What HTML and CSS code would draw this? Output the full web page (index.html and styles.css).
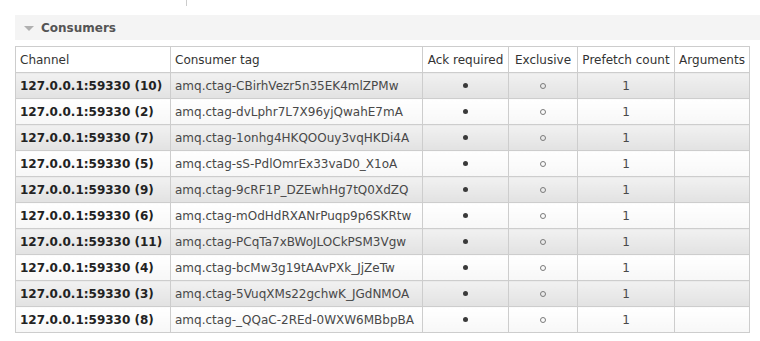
FILE: index.html
```html
<!DOCTYPE html>
<html>
<head>
<meta charset="utf-8">
<link rel="stylesheet" href="styles.css">
</head>
<body>
<div class="topbar"><span class="tick"></span></div>
<div class="section">
  <div class="section-head"><span class="tri"></span><span class="title">Consumers</span></div>
  <table class="list">
    <colgroup>
      <col class="c-ch"><col class="c-tag"><col class="c-ack"><col class="c-ex"><col class="c-pf"><col class="c-arg">
    </colgroup>
    <thead>
      <tr><th>Channel</th><th>Consumer tag</th><th class="ctr">Ack required</th><th class="ctr">Exclusive</th><th class="ctr">Prefetch count</th><th class="ctr">Arguments</th></tr>
    </thead>
    <tbody>
      <tr class="alt"><td class="ch">127.0.0.1:59330 (10)</td><td>amq.ctag-CBirhVezr5n35EK4mlZPMw</td><td class="ctr"><span class="yes" title="●"></span></td><td class="ctr"><span class="no" title="○"></span></td><td class="ctr">1</td><td></td></tr>
      <tr><td class="ch">127.0.0.1:59330 (2)</td><td>amq.ctag-dvLphr7L7X96yjQwahE7mA</td><td class="ctr"><span class="yes" title="●"></span></td><td class="ctr"><span class="no" title="○"></span></td><td class="ctr">1</td><td></td></tr>
      <tr class="alt"><td class="ch">127.0.0.1:59330 (7)</td><td>amq.ctag-1onhg4HKQOOuy3vqHKDi4A</td><td class="ctr"><span class="yes" title="●"></span></td><td class="ctr"><span class="no" title="○"></span></td><td class="ctr">1</td><td></td></tr>
      <tr><td class="ch">127.0.0.1:59330 (5)</td><td>amq.ctag-sS-PdlOmrEx33vaD0_X1oA</td><td class="ctr"><span class="yes" title="●"></span></td><td class="ctr"><span class="no" title="○"></span></td><td class="ctr">1</td><td></td></tr>
      <tr class="alt"><td class="ch">127.0.0.1:59330 (9)</td><td>amq.ctag-9cRF1P_DZEwhHg7tQ0XdZQ</td><td class="ctr"><span class="yes" title="●"></span></td><td class="ctr"><span class="no" title="○"></span></td><td class="ctr">1</td><td></td></tr>
      <tr><td class="ch">127.0.0.1:59330 (6)</td><td>amq.ctag-mOdHdRXANrPuqp9p6SKRtw</td><td class="ctr"><span class="yes" title="●"></span></td><td class="ctr"><span class="no" title="○"></span></td><td class="ctr">1</td><td></td></tr>
      <tr class="alt"><td class="ch">127.0.0.1:59330 (11)</td><td>amq.ctag-PCqTa7xBWoJLOCkPSM3Vgw</td><td class="ctr"><span class="yes" title="●"></span></td><td class="ctr"><span class="no" title="○"></span></td><td class="ctr">1</td><td></td></tr>
      <tr><td class="ch">127.0.0.1:59330 (4)</td><td>amq.ctag-bcMw3g19tAAvPXk_JjZeTw</td><td class="ctr"><span class="yes" title="●"></span></td><td class="ctr"><span class="no" title="○"></span></td><td class="ctr">1</td><td></td></tr>
      <tr class="alt"><td class="ch">127.0.0.1:59330 (3)</td><td>amq.ctag-5VuqXMs22gchwK_JGdNMOA</td><td class="ctr"><span class="yes" title="●"></span></td><td class="ctr"><span class="no" title="○"></span></td><td class="ctr">1</td><td></td></tr>
      <tr><td class="ch">127.0.0.1:59330 (8)</td><td>amq.ctag-_QQaC-2REd-0WXW6MBbpBA</td><td class="ctr"><span class="yes" title="●"></span></td><td class="ctr"><span class="no" title="○"></span></td><td class="ctr">1</td><td></td></tr>
    </tbody>
  </table>
</div>
</body>
</html>
```
FILE: styles.css
```css
html, body {
  margin: 0;
  padding: 0;
  background: #fff;
}
body {
  font-family: "DejaVu Sans", Verdana, sans-serif;
  font-size: 12px;
  color: #484848;
}
.topbar {
  height: 6px;
  padding-left: 186px;
}
.tick {
  display: block;
  width: 1px;
  height: 6px;
  background: #ccc;
}
.section {
  padding: 9px 0 0 15px;
}
.section-head {
  display: flex;
  align-items: center;
  height: 25px;
  background: #f4f4f4;
  padding-left: 9px;
}
.tri {
  width: 0;
  height: 0;
  border-left: 5px solid transparent;
  border-right: 5px solid transparent;
  border-top: 5px solid #b0b0b0;
  margin-right: 7px;
  margin-top: 1px;
}
.title {
  font-weight: bold;
  color: #555;
}
.list {
  margin-top: 6px;
  border-collapse: collapse;
  table-layout: fixed;
  width: 734px;
}
.c-ch { width: 155px; }
.c-tag { width: 252px; }
.c-ack { width: 86px; }
.c-ex { width: 69px; }
.c-pf { width: 97px; }
.c-arg { width: 75px; }
.list th, .list td {
  border: 1px solid #cdcdcd;
  height: 25px;
  padding: 0 4px;
  text-align: left;
  white-space: nowrap;
  overflow: hidden;
}
.list th {
  font-weight: normal;
  color: #333;
  background: #fff;
}
.list .ctr { text-align: center; }
.list td.ch {
  font-weight: bold;
  color: #222;
}
.list tbody tr td { background: linear-gradient(#ffffff, #f7f7f7); }
.list tbody tr.alt td { background: linear-gradient(#f1f1f1, #e2e2e2); }
.yes {
  display: inline-block;
  width: 5px;
  height: 5px;
  border-radius: 50%;
  background: #3a3a3a;
  vertical-align: middle;
  margin-top: -1px;
}
.no {
  display: inline-block;
  box-sizing: border-box;
  width: 6px;
  height: 6px;
  border-radius: 50%;
  border: 1px solid #7a7a7a;
  vertical-align: middle;
  margin-top: -1px;
}
```
